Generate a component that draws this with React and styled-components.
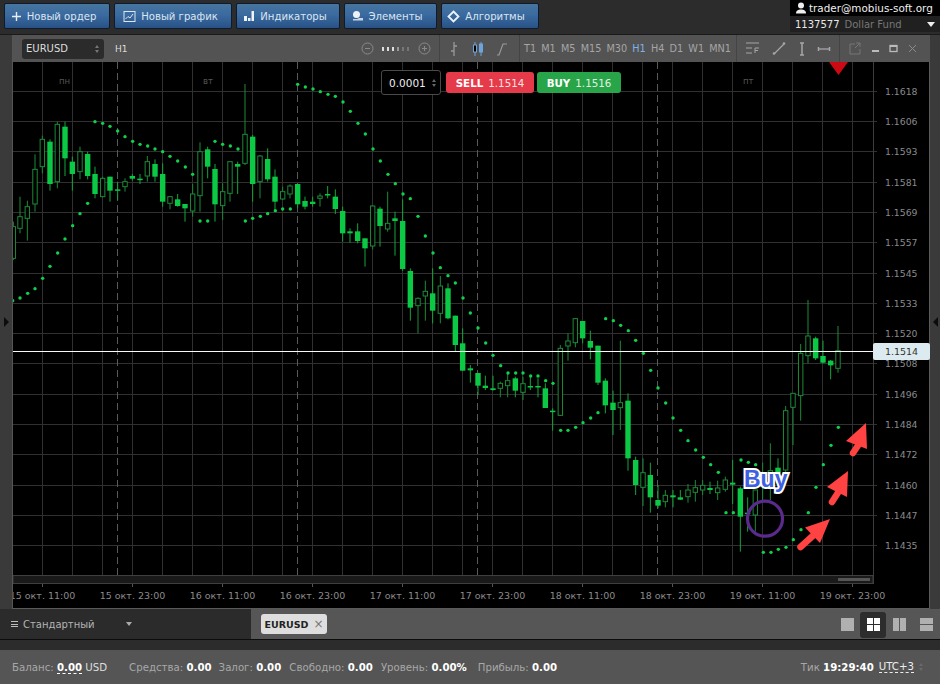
import React from 'react';
import styled, { createGlobalStyle } from 'styled-components';

const Global = createGlobalStyle`
  html, body { margin: 0; padding: 0; background: #2d2d2d; }
  body { font-family: "DejaVu Sans", Verdana, sans-serif; overflow: hidden; }
  * { box-sizing: border-box; }
`;

/* candle data: [x, wickTop, bodyTop, bodyBottom, wickBottom, filled] in picture scale */
const Z6 = [[10,455,470,565,570,0],[30,380,440,475,490,0],[52,392,410,445,512,0],[75,253,298,402,425,0],[97,197,208,290,310,0],[120,208,215,342,362,1],[142,155,163,335,355,0],[165,155,170,265,318,1],[187,260,275,312,362,1],[210,230,245,305,328,0],[233,245,252,318,328,1],[255,290,312,372,385,1],[278,320,325,380,382,0],[300,320,320,362,395,1],[323,335,358,360,390,1],[345,325,335,350,365,0],[367,312,318,326,332,1],[390,312,326,329,342,1],[412,258,275,318,335,0],[435,268,282,320,335,1],[458,280,312,395,410,1],[480,378,380,400,418,0],[503,372,388,408,410,1],[525,402,402,415,455,1],[548,342,372,423,440,0],[570,217,245,377,425,0],[593,230,238,290,325,1],[615,282,297,403,455,1],[638,340,365,407,450,0],[660,275,275,370,395,0],[683,275,282,290,372,1],[705,42,193,280,285,0]];
const Z7 = [[38,195,200,342,395,1],[60,255,258,335,385,0],[83,235,267,328,335,1],[105,298,320,395,420,1],[128,350,365,387,390,0],[150,343,348,372,385,0],[173,342,342,403,415,1],[195,380,393,410,418,1],[218,380,395,402,410,1],[240,370,378,385,410,0],[263,348,372,375,385,1],[286,358,380,417,432,1],[308,410,423,490,515,1],[330,475,484,490,518,1],[353,460,484,513,520,1],[375,505,505,535,590,1],[398,405,408,528,538,0],[420,410,416,468,530,1],[443,365,460,477,485,0],[465,425,445,453,557,1],[488,388,453,597,603,1]];
const Z8 = [[61,25,33,143,182,1],[84,112,115,137,220,0],[106,62,94,108,182,0],[128,25,100,152,190,1],[151,48,78,160,190,0],[174,70,85,175,178,1],[196,167,167,255,275,1],[218,205,250,332,332,1],[241,315,325,331,368,1],[264,339,339,377,405,1],[286,347,377,384,390,1],[309,347,385,390,392,1],[331,365,370,385,412,0],[353,340,362,377,412,0],[376,350,355,392,412,1],[399,350,371,397,420,0],[421,350,378,382,390,1],[444,355,378,382,412,1],[466,370,385,444,444,1],[488,445,452,456,512,1],[511,255,265,466,468,0],[534,220,243,258,302,0],[556,175,176,248,262,0],[578,183,183,235,250,1],[601,212,243,263,298,1],[624,257,257,368,375,1],[646,355,362,436,460,1],[669,392,428,450,525,1],[691,242,428,443,510,0],[714,400,422,595,632,1],[737,590,600,675,705,1],[759,595,638,682,738,0],[781,608,645,712,758,1],[804,675,720,737,745,1],[826,690,706,725,742,0],[849,690,706,712,742,1],[871,690,712,719,720,1],[894,672,690,710,728,0],[916,660,683,697,725,0]];
const Z5 = [[8,540,556,570,585,0],[30,545,564,570,582,1],[53,542,564,578,600,0],[76,530,540,568,575,0],[98,480,548,554,612,1],[121,560,565,650,755,1],[143,592,638,642,695,1],[166,570,570,645,695,0],[188,488,540,560,600,0],[211,430,512,525,600,0],[234,475,503,520,530,1],[257,318,332,510,530,0],[279,280,280,322,435,0],[302,132,160,287,362,0],[324,0,108,167,190,0],[347,110,115,175,180,1],[369,122,168,188,190,1],[392,180,182,196,238,1],[414,78,152,205,218,0]];

const D6 = [[8,692],[30,684],[53,670],[75,656],[98,625],[120,589],[143,549],[165,507],[188,467],[210,431],[233,400],[255,155],[278,160],[300,169],[323,183],[345,200],[368,214],[390,223],[413,228],[435,237],[458,245],[480,259],[503,273],[526,291],[548,313],[570,453],[593,453],[615,214],[638,223],[661,228],[684,237],[706,453]];
const D7 = [[38,445],[61,439],[83,431],[106,422],[128,417],[151,417],[173,43],[196,51],[219,57],[241,65],[264,73],[286,79],[309,96],[331,124],[354,160],[376,192],[399,237],[421,273],[444,313],[466,341],[489,372],[511,386],[534,439],[556,498],[579,549],[601,593],[624,617],[646,639]];
const D8 = [[219,114],[241,159],[264,204],[287,249],[309,286],[332,317],[354,339],[377,339],[399,339],[422,348],[444,348],[467,362],[489,370],[512,511],[534,511],[557,502],[579,488],[602,474],[624,458],[647,176],[670,182],[692,196],[715,212],[737,241],[760,280],[782,331],[804,384],[827,429],[849,474],[872,511],[894,542],[917,570]];
const D5 = [[10,472],[32,494],[55,517],[78,638],[100,638],[123,480],[145,487],[167,494],[190,757],[213,757],[235,748],[258,742],[280,719],[303,689],[325,638],[348,562],[370,494],[393,436],[415,382]];

const place = (rows, ox, oy) => rows.map(r => [ox + r[0] / 3, ...r.slice(1, 5).map(v => oy + v / 3), r[5]]);
const candles = [...place(Z6, 10, 70), ...place(Z7, 240, 70), ...place(Z8, 390, 260), ...place(Z5, 700, 300)];
const dotPlace = (rows, ox, oy) => rows.map(r => [ox + r[0] / 3, oy + r[1] / 3]);
const dots = [...dotPlace(D6, 10, 70), ...dotPlace(D7, 240, 70), ...dotPlace(D8, 390, 260), ...dotPlace(D5, 700, 300)];

const prices = ['1.1618','1.1606','1.1593','1.1581','1.1569','1.1557','1.1545','1.1533','1.1520','1.1508','1.1496','1.1484','1.1472','1.1460','1.1447','1.1435'];
const dates = ['15 окт. 11:00','15 окт. 23:00','16 окт. 11:00','16 окт. 23:00','17 окт. 11:00','17 окт. 23:00','18 окт. 11:00','18 окт. 23:00','19 окт. 11:00','19 окт. 23:00'];
const verticals = Array.from({ length: 29 }, (_, i) => 12.5 + 30 * i);
const dashed = [117.5, 297.5, 477.5, 657.5];
const timeframes = ['T1','M1','M5','M15','M30','H1','H4','D1','W1','MN1'];

const Page = styled.div`
  width: 940px; height: 684px; display: flex; flex-direction: column;
  background: #2d2d2d; overflow: hidden;
`;
const TopBar = styled.header`
  height: 35px; flex: none; display: flex; align-items: flex-start; gap: 4px;
  padding: 3px 0 0 4px; background: #2c2c2c; position: relative;
  border-bottom: 1px solid #1a1a1a;
`;
const ToolButton = styled.button`
  width: ${p => p.$w}px; height: 26px; display: flex; align-items: center; justify-content: center; gap: 5px;
  padding: 0 ${p => p.$pr || 0}px 0 0; border: 1px solid #0e1b2e; border-radius: 2px;
  background: linear-gradient(#47759f, #3a6aa0 45%, #285286);
  color: #dce6f0; font: 10.1px "DejaVu Sans", sans-serif;
`;
const Account = styled.div`
  margin-left: auto; margin-top: -3px; width: 150px; height: 32px; display: flex; flex-direction: column; background: #000;
`;
const AccountTop = styled.div`
  height: 16px; display: flex; align-items: center; gap: 2px; padding-left: 5px;
  color: #f0f0f0; font-size: 10.4px; white-space: nowrap;
`;
const AccountBottom = styled.div`
  height: 16px; display: flex; align-items: center; padding: 0 5px; background: #202020;
  font-size: 10px; color: #777; white-space: nowrap;
`;
const AccountId = styled.span` color: #e8e8e8; margin-right: 5px; `;
const DownTriangle = styled.span`
  margin-left: auto; width: 0; height: 0; border: 4px solid transparent; border-top: 5px solid #eee; border-bottom: 0;
`;
const Middle = styled.main`
  flex: none; height: 574px; display: flex; background: #3a3a3a;
`;
const Gutter = styled.div`
  width: ${p => p.$w}px; flex: none; display: flex; align-items: center; justify-content: center;
  background: #3a3a3a;
`;
const SideArrow = styled.span`
  width: 0; height: 0; border-top: 5px solid transparent; border-bottom: 5px solid transparent;
  ${p => p.$toRight ? 'border-left: 5px solid #0c0c0c;' : 'border-right: 5px solid #0c0c0c;'}
`;
const ChartWindow = styled.section`
  flex: 1; min-width: 0; display: flex; flex-direction: column; border-left: 1px solid #555;
`;
const WindowHeader = styled.div`
  height: 27px; flex: none; display: flex; align-items: center; background: #535353; padding-left: 9px;
`;
const SymbolSelect = styled.div`
  width: 82px; height: 20px; display: flex; align-items: center; justify-content: space-between;
  padding: 0 5px 0 4px; background: #2b2b2b; border-radius: 3px; color: #ddd; font-size: 10px;
`;
const Stepper = styled.span`
  display: flex; flex-direction: column; gap: 2px;
  &::before, &::after { content: ""; width: 0; height: 0; border-left: 2.5px solid transparent; border-right: 2.5px solid transparent; }
  &::before { border-bottom: 3px solid ${p => p.$c || '#777'}; }
  &::after { border-top: 3px solid ${p => p.$c || '#777'}; }
`;
const PeriodLabel = styled.span` margin-left: 11px; color: #ddd; font-size: 9px; `;
const Section = styled.div`
  height: 100%; width: ${p => p.$w}px; flex: none; display: flex; align-items: center; justify-content: space-between;
  border-left: ${p => p.$sep ? '1px solid #444' : '0'}; padding: 0 ${p => p.$pr}px 0 ${p => p.$pl}px; margin-left: ${p => p.$auto ? 'auto' : '0'};
`;
const Timeframe = styled.span` font-size: 9.7px; color: ${p => p.$on ? '#7fb2e6' : '#a6a6a6'}; `;
const ChartArea = styled.div`
  position: relative; flex: 1; min-height: 0; background: #000;
  border-right: 1px solid #5a5a5a; border-bottom: 1px solid #5a5a5a;
`;
const ChartSvg = styled.svg` display: block; width: 100%; height: 100%; `;
const AxisText = styled.text`
  font: ${p => p.$size}px "DejaVu Sans", sans-serif; fill: #8a8a8a;
`;
const DayText = styled.text` font: 8.5px "DejaVu Sans", sans-serif; fill: #555; `;
const TradePanel = styled.div`
  position: absolute; left: 368px; top: 8px; display: flex; align-items: center; gap: 5px;
`;
const StepInput = styled.div`
  width: 60px; height: 25px; display: flex; align-items: center; justify-content: space-between; padding: 0 4px 0 7px;
  background: #000; border: 1px solid #4a4a4a; border-radius: 3px; color: #eee; font-size: 10.5px;
`;
const TradeButton = styled.div`
  width: ${p => p.$w}px; height: 21px; display: flex; align-items: center; justify-content: center; gap: 5px;
  border-radius: 3px; background: ${p => p.$bg}; color: #fff; font-size: 10.3px; white-space: nowrap;
  margin-left: ${p => p.$ml || 0}px;
  & b { font-weight: 700; }
  & span { opacity: .85; }
`;
const PriceTag = styled.div`
  position: absolute; left: 860px; top: 281px; width: 57px; height: 17px; display: flex; align-items: center; justify-content: center;
  background: #dcebf0; border-radius: 2px; color: #333; font-size: 9.5px;
`;
const BuyNote = styled.div`
  position: absolute; left: 731px; top: 402px; font: 700 23px "Liberation Sans", sans-serif; line-height: 30px;
  color: #3f60e2; -webkit-text-stroke: 4px #fff; paint-order: stroke fill;
`;
const TabBar = styled.div`
  height: 31px; flex: none; display: flex; background: #565656; border-bottom: 1px solid #0c0c0c;
`;
const LayoutName = styled.div`
  width: 251px; flex: none; display: flex; align-items: center; gap: 5px; padding-left: 11px; background: #2b2b2b;
  color: #b4b4b4; font-size: 10px;
`;
const MenuLines = styled.span`
  width: 7px; height: 6px; border-top: 1px solid #bbb; border-bottom: 1px solid #bbb; position: relative;
  &::after { content: ""; position: absolute; left: 0; right: 0; top: 1.5px; height: 1px; background: #bbb; }
`;
const NameArrow = styled.span`
  margin-left: 26px; width: 0; height: 0; border: 3.5px solid transparent; border-top: 4px solid #aaa; border-bottom: 0;
`;
const Tab = styled.div`
  margin: 5px 0 0 10px; width: 66px; height: 20px; display: flex; align-items: center; justify-content: center; gap: 5px;
  background: #dedede; border-radius: 3px; color: #222; font-size: 9.5px; font-weight: 700;
  & span { color: #777; font-size: 12px; font-weight: 400; line-height: 1; }
`;
const LayoutIcons = styled.div`
  margin-left: auto; padding: 1px 1px 0 0; display: flex; align-items: center; gap: .3px;
`;
const LayoutButton = styled.div`
  width: 26px; height: 26px; display: flex; align-items: center; justify-content: center; border-radius: 3px;
  background: ${p => p.$on ? '#2d2d2d' : 'transparent'};
`;
const Divider = styled.div` height: 10px; flex: none; background: #2c2c2c; `;
const StatusBar = styled.footer`
  flex: 1; display: flex; align-items: center; padding: 0 0 0 12px; background: #555; font-size: 10.2px; color: #a8a8a8;
`;
const Stat = styled.span`
  margin-left: ${p => p.$ml || 0}px; white-space: nowrap;
  & b { color: #fff; font-weight: 700; }
`;
const DashedValue = styled.b` border-bottom: 1px dashed #fff; `;
const Currency = styled.span` color: #ddd; `;
const Zone = styled.span` color: #eee; border-bottom: 1px dashed #eee; `;
const Clock = styled.div` margin-left: auto; margin-right: 17px; display: flex; align-items: center; gap: 5px; white-space: nowrap; `;

const Ico = ({ children, w = 14, h = 14 }) => (
  <svg width={w} height={h} viewBox={`0 0 ${w} ${h}`} fill="none" style={{ flex: 'none' }}>{children}</svg>
);

const arrow = (tail, neck, a, tip, b) => (
  <g key={tip.join()}>
    <line x1={tail[0]} y1={tail[1]} x2={neck[0]} y2={neck[1]} stroke="#ff4242" strokeWidth="6.5" strokeLinecap="round" />
    <polygon points={`${a.join()} ${tip.join()} ${b.join()}`} fill="#ff4242" />
  </g>
);

function Chart() {
  return (
    <ChartSvg viewBox="13 62 916 546">
      {prices.map((_, i) => {
        const y = Math.round(90.7 + 30.3 * i) + 0.5;
        return <line key={i} x1="13" x2="877" y1={y} y2={y} stroke="#303030" />;
      })}
      {verticals.map(x => <line key={x} x1={x} x2={x} y1="62" y2="575" stroke="#303030" />)}
      {dashed.map(x => <line key={x} x1={x} x2={x} y1="62" y2="575" stroke="#5a5a5a" strokeDasharray="7 4" />)}
      <line x1="873.5" x2="873.5" y1="62" y2="584" stroke="#3c3c3c" />
      <rect x="13" y="575.5" width="860" height="8" fill="#1a1a1a" stroke="#3f3f3f" />
      <rect x="838" y="578" width="32" height="3" fill="#555" />
      {dates.map((_, i) => <line key={i} x1={42.5 + 90 * i} x2={42.5 + 90 * i} y1="584" y2="587" stroke="#555" />)}
      <DayText x="59" y="84">пн</DayText>
      <DayText x="203" y="84">вт</DayText>
      <DayText x="743" y="84">пт</DayText>
      {candles.map(([x, wt, bt, bb, wb, f], i) => (
        <g key={i}>
          <line x1={x} x2={x} y1={wt} y2={wb} stroke={f ? '#14a53c' : '#1c8a38'} />
          {f
            ? <rect x={x - 2.7} y={bt} width="5.4" height={Math.max(bb - bt, 1.5)} fill="#0bc945" />
            : <rect x={x - 2.2} y={bt} width="4.4" height={bb - bt} fill="#000" stroke="#1c8a38" />}
        </g>
      ))}
      {dots.map(([x, y], i) => <circle key={i} cx={x} cy={y} r="1.7" fill="#0fd24c" />)}
      <line x1="13" x2="873" y1="351.5" y2="351.5" stroke="#f8f8f8" />
      <polygon points="829,62 848,62 838.5,75" fill="#cc0a14" />
      {prices.map((p, i) => <AxisText key={p} $size={9.3} x="885" y={94.7 + 30.3 * i}>{p}</AxisText>)}
      {dates.map((d, i) => <AxisText key={d} $size={9.5} x={42.5 + 90 * i} y="598.5" textAnchor="middle">{d}</AxisText>)}
      <circle cx="765" cy="518.7" r="17.5" fill="none" stroke="#5a2a8c" strokeWidth="3.2" />
      {arrow([800.5, 547], [816, 533], [805, 527.5], [830, 519], [820, 543])}
      {arrow([832, 502], [841, 488], [827, 487], [848, 471], [847, 497])}
      {arrow([853, 453], [861, 441], [846, 441], [866, 423], [867, 449])}
    </ChartSvg>
  );
}

export default function App() {
  return (
    <Page>
      <Global />
      <TopBar>
        <ToolButton $w={106} $pr={7}>
          <Ico w={11} h={11}><path d="M5.5 1v9M1 5.5h9" stroke="#e8eef5" strokeWidth="1.4" /></Ico>
          Новый ордер
        </ToolButton>
        <ToolButton $w={118} $pr={5}>
          <Ico w={13} h={13}><rect x="1" y="1.5" width="11" height="10" stroke="#dce6f0" /><path d="M2.5 9l2.5-2.5 2 1.5 3-4" stroke="#dce6f0" /></Ico>
          Новый график
        </ToolButton>
        <ToolButton $w={104} $pr={6}>
          <Ico w={12} h={12}><path d="M1 6h3v5H1zM5 8h2.500v3H5zM8.500 1H11v10H8.500z" fill="#eef3f8" /></Ico>
          Индикаторы
        </ToolButton>
        <ToolButton $w={93} $pr={7}>
          <Ico w={12} h={12}><circle cx="4.500" cy="4.500" r="3.500" fill="#eef3f8" /><path d="M1 10.500h10V8H7L5 9H1z" fill="#c8d4e0" /></Ico>
          Элементы
        </ToolButton>
        <ToolButton $w={98} $pr={8}>
          <Ico w={13} h={13}><path d="M6.500 1.500l5 5-5 5-5-5z" stroke="#eef3f8" strokeWidth="1.800" /></Ico>
          Алгоритмы
        </ToolButton>
        <Account>
          <AccountTop>
            <Ico w={12} h={12}><circle cx="6" cy="3.500" r="3" fill="#eee" /><path d="M1 11.500c0-3 2-4 5-4s5 1 5 4z" fill="#eee" /></Ico>
            trader@mobius-soft.org
          </AccountTop>
          <AccountBottom>
            <AccountId>1137577</AccountId>
            Dollar Fund
            <DownTriangle />
          </AccountBottom>
        </Account>
      </TopBar>

      <Middle>
        <Gutter $w={12}><SideArrow $toRight /></Gutter>
        <ChartWindow>
          <WindowHeader>
            <SymbolSelect>EURUSD<Stepper /></SymbolSelect>
            <PeriodLabel>H1</PeriodLabel>
            <Section $auto $w={79} $pl={1} $pr={8}>
              <Ico w={13} h={13}><circle cx="6.500" cy="6.500" r="5.500" stroke="#8a8a8a" /><path d="M4 6.500h5" stroke="#8a8a8a" /></Ico>
              <Ico w={30} h={6}>
                {[1, 6, 11, 16, 21, 26].map((x, i) => <rect key={x} x={x} y={1} width="2" height="4" fill={i < 3 ? '#ddd' : i < 4 ? '#999' : '#777'} />)}
              </Ico>
              <Ico w={13} h={13}><circle cx="6.500" cy="6.500" r="5.500" stroke="#8a8a8a" /><path d="M4 6.500h5M6.500 4v5" stroke="#8a8a8a" /></Ico>
            </Section>
            <Section $sep $w={80} $pl={8} $pr={11}>
              <Ico w={12} h={16}><path d="M6 1v14M6 5h3M3 10h3" stroke="#999" strokeWidth="1.300" /></Ico>
              <Ico w={12} h={16}><path d="M3 1v14M9 1v14" stroke="#6ea4dc" /><rect x="1.500" y="4" width="3" height="7" fill="#000" stroke="#6ea4dc" /><rect x="7.500" y="3" width="3" height="8" fill="#6ea4dc" stroke="#6ea4dc" /></Ico>
              <Ico w={12} h={16}><path d="M1 14l2 0 4-11h4" stroke="#999" strokeWidth="1.200" /></Ico>
            </Section>
            <Section $sep $w={217} $pl={4} $pr={5}>
              {timeframes.map(t => <Timeframe key={t} $on={t === 'H1'}>{t}</Timeframe>)}
            </Section>
            <Section $sep $w={103} $pl={8} $pr={8}>
              <Ico w={15} h={13}><path d="M1 1h13M1 6h6M1 11h6" stroke="#a6a6a6" /><path d="M10 11V6h4M10 8.500h3" stroke="#a6a6a6" /></Ico>
              <Ico w={14} h={13}><path d="M2 12L12 2" stroke="#a6a6a6" strokeWidth="1.300" /><circle cx="2" cy="11.500" r="1.300" fill="#a6a6a6" /><circle cx="12" cy="1.500" r="1.300" fill="#a6a6a6" /></Ico>
              <Ico w={6} h={14}><path d="M3 1v12" stroke="#a6a6a6" strokeWidth="1.500" /><path d="M1 1h4M1 13h4" stroke="#a6a6a6" strokeWidth="1.500" /></Ico>
              <Ico w={14} h={6}><path d="M1 3h12" stroke="#a6a6a6" strokeWidth="1.300" /><path d="M1.500 1v4M12.500 1v4" stroke="#a6a6a6" strokeWidth="1.500" /></Ico>
            </Section>
            <Section $sep $w={91} $pl={8} $pr={13}>
              <Ico w={13} h={13}><path d="M7 2H2v10h10V7M8 1h4v4M12 1L7 6" stroke="#777" /></Ico>
              <Ico w={9} h={9}><path d="M1 7h7" stroke="#bbb" strokeWidth="2" /></Ico>
              <Ico w={9} h={9}><rect x="1" y="1.500" width="7" height="6" stroke="#bbb" strokeWidth="1.300" /><path d="M1 2h7" stroke="#bbb" strokeWidth="2" /></Ico>
              <Ico w={9} h={9}><path d="M1 1l7 7M8 1L1 8" stroke="#8a8a8a" /></Ico>
            </Section>
          </WindowHeader>
          <ChartArea>
            <Chart />
            <TradePanel>
              <StepInput>0.0001<Stepper $c="#666" /></StepInput>
              <TradeButton $w={88} $bg="#e53a49"><b>SELL</b><span>1.1514</span></TradeButton>
              <TradeButton $w={84} $bg="#27a548" $ml={-2}><b>BUY</b><span>1.1516</span></TradeButton>
            </TradePanel>
            <PriceTag>1.1514</PriceTag>
            <BuyNote>Buy</BuyNote>
          </ChartArea>
        </ChartWindow>
        <Gutter $w={10}><SideArrow /></Gutter>
      </Middle>

      <TabBar>
        <LayoutName><MenuLines />Стандартный<NameArrow /></LayoutName>
        <Tab>EURUSD<span>×</span></Tab>
        <LayoutIcons>
          <LayoutButton><Ico w={13} h={13}><rect width="13" height="13" fill="#b0b0b0" /></Ico></LayoutButton>
          <LayoutButton $on><Ico w={13} h={13}><path d="M0 0h6v6H0zM7 0h6v6H7zM0 7h6v6H0zM7 7h6v6H7z" fill="#fff" /></Ico></LayoutButton>
          <LayoutButton><Ico w={13} h={13}><path d="M0 0h6v13H0zM7 0h6v13H7z" fill="#b0b0b0" /></Ico></LayoutButton>
          <LayoutButton><Ico w={13} h={13}><path d="M0 0h13v6H0zM0 7h13v6H0z" fill="#b0b0b0" /></Ico></LayoutButton>
        </LayoutIcons>
      </TabBar>
      <Divider />
      <StatusBar>
        <Stat>Баланс: <DashedValue>0.00</DashedValue> <Currency>USD</Currency></Stat>
        <Stat $ml={22}>Средства: <b>0.00</b></Stat>
        <Stat $ml={7}>Залог: <b>0.00</b></Stat>
        <Stat $ml={8}>Свободно: <b>0.00</b></Stat>
        <Stat $ml={8}>Уровень: <b>0.00%</b></Stat>
        <Stat $ml={11}>Прибыль: <b>0.00</b></Stat>
        <Clock>
          <Stat>Тик <b>19:29:40</b></Stat>
          <Zone>UTC+3</Zone>
          <Stepper $c="#6a6a6a" />
        </Clock>
      </StatusBar>
    </Page>
  );
}
